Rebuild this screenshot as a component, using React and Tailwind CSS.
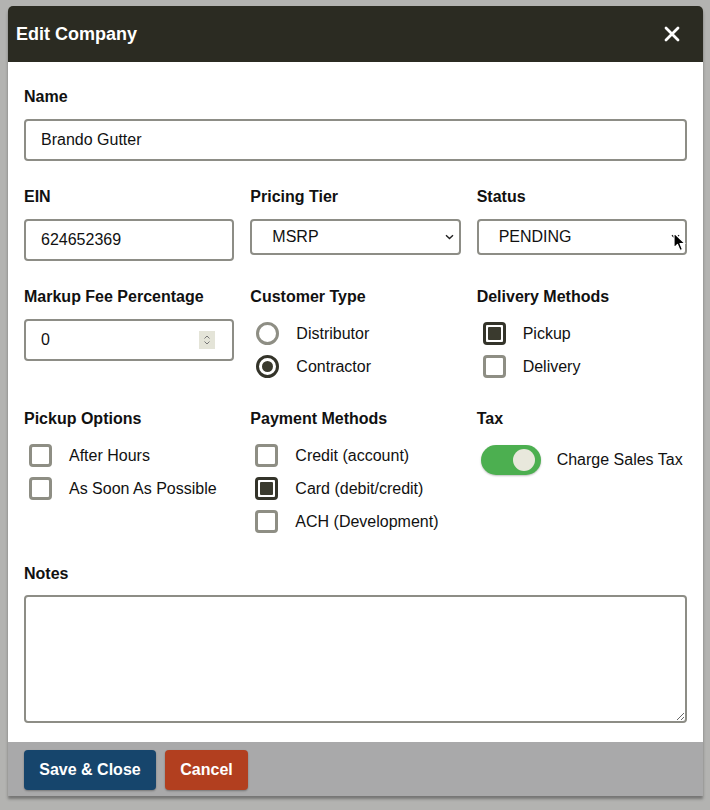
import React from "react";

const font = { fontFamily: '"Liberation Sans", Arial, Helvetica, sans-serif' };

function Label({ children, className = "mb-3" }) {
  return <div className={"text-[16px] font-bold leading-[20px] text-[#111] " + className}>{children}</div>;
}

function Checkbox({ checked }) {
  if (checked) {
    return (
      <div className="w-[23px] h-[23px] shrink-0 rounded-[4px] border-[3px] border-[#34342a] bg-white p-[2px]">
        <div className="w-full h-full bg-[#3a3a2e] rounded-[1px]" />
      </div>
    );
  }
  return <div className="w-[23px] h-[23px] shrink-0 rounded-[4px] border-[3px] border-[#8e8e84] bg-white" />;
}

function Radio({ checked }) {
  if (checked) {
    return (
      <div className="w-[23px] h-[23px] shrink-0 rounded-full border-[3px] border-[#34342a] bg-white flex items-center justify-center">
        <div className="w-[11px] h-[11px] rounded-full bg-[#3a3a2e]" />
      </div>
    );
  }
  return <div className="w-[23px] h-[23px] shrink-0 rounded-full border-[3px] border-[#8e8e84] bg-white" />;
}

function CheckRow({ checked, radio, children, offset = "ml-[5px]" }) {
  return (
    <div className="h-[33px] flex items-center">
      <div className={offset}>{radio ? <Radio checked={checked} /> : <Checkbox checked={checked} />}</div>
      <span className="ml-[17px] text-[16px] text-[#111]">{children}</span>
    </div>
  );
}

function Chevron() {
  return (
    <svg width="9" height="6" viewBox="0 0 9 6" className="shrink-0">
      <path d="M1 1.2 L4.5 4.6 L8 1.2" fill="none" stroke="#222" strokeWidth="1.4" />
    </svg>
  );
}

export default function App() {
  return (
    <div style={font} className="min-h-[810px] w-[710px] bg-[#b3b3b1] pt-[6px] pl-[8px] pr-[7px]">
      <div className="rounded-t-[5px] overflow-hidden shadow-[0_3px_3px_rgba(0,0,0,0.35)]">
        <div className="h-[56px] bg-[#2b2b22] flex items-center justify-between pl-2 pr-[23px]">
          <span className="text-white text-[18px] font-bold">Edit Company</span>
          <svg width="16" height="16" viewBox="0 0 16 16">
            <path d="M2 2 L14 14 M14 2 L2 14" stroke="#fff" strokeWidth="2.8" strokeLinecap="round" />
          </svg>
        </div>
        <div className="bg-white px-4 pt-[25px] pb-[19px]">
          <Label>Name</Label>
          <div className="h-[42px] border-2 border-[#8d8d86] rounded-[4px] flex items-center px-[15px] text-[16px] text-[#111]">
            Brando Gutter
          </div>

          <div className="grid grid-cols-3 gap-x-4 mt-[26px]">
            <div>
              <Label>EIN</Label>
              <div className="h-[42px] border-2 border-[#8d8d86] rounded-[4px] flex items-center px-[15px] text-[16px] text-[#111]">
                624652369
              </div>
            </div>
            <div>
              <Label>Pricing Tier</Label>
              <div className="h-[36px] border-2 border-[#8d8d86] rounded-[4px] flex items-center justify-between pl-[20px] pr-[5px] text-[16px] text-[#111]">
                <span>MSRP</span>
                <Chevron />
              </div>
            </div>
            <div className="relative">
              <Label>Status</Label>
              <div className="h-[36px] border-2 border-[#8d8d86] rounded-[4px] flex items-center justify-between pl-[20px] pr-[5px] text-[16px] text-[#111]">
                <span>PENDING</span>
                <Chevron />
              </div>
              <svg className="absolute left-[196px] top-[45px]" width="14" height="20" viewBox="0 0 14 20">
                <path d="M1 1 L1 16 L4.5 12.5 L7 18.5 L9.5 17.5 L7 11.5 L12 11.5 Z" fill="#000" stroke="#fff" strokeWidth="1.2" strokeLinejoin="round" />
              </svg>
            </div>
          </div>

          <div className="grid grid-cols-3 gap-x-4 mt-[26px]">
            <div>
              <Label>Markup Fee Percentage</Label>
              <div className="h-[42px] border-2 border-[#8d8d86] rounded-[4px] flex items-center justify-between pl-[15px] pr-[17px] text-[16px] text-[#111]">
                <span>0</span>
                <div className="w-[16px] h-[18px] bg-[#e4e4d8] flex items-center justify-center">
                  <svg width="8" height="12" viewBox="0 0 8 12">
                    <path d="M1.5 4.5 L4 2 L6.5 4.5 M1.5 7.5 L4 10 L6.5 7.5" fill="none" stroke="#777" strokeWidth="1" />
                  </svg>
                </div>
              </div>
            </div>
            <div>
              <Label>Customer Type</Label>
              <div className="-mt-[2px]">
                <CheckRow radio offset="ml-[6px]">Distributor</CheckRow>
                <CheckRow radio checked offset="ml-[6px]">Contractor</CheckRow>
              </div>
            </div>
            <div>
              <Label>Delivery Methods</Label>
              <div className="-mt-[2px]">
                <CheckRow checked offset="ml-[6px]">Pickup</CheckRow>
                <CheckRow offset="ml-[6px]">Delivery</CheckRow>
              </div>
            </div>
          </div>

          <div className="grid grid-cols-3 gap-x-4 mt-[26px]">
            <div>
              <Label>Pickup Options</Label>
              <div className="-mt-[2px]">
                <CheckRow>After Hours</CheckRow>
                <CheckRow>As Soon As Possible</CheckRow>
              </div>
            </div>
            <div>
              <Label>Payment Methods</Label>
              <div className="-mt-[2px]">
                <CheckRow>Credit (account)</CheckRow>
                <CheckRow checked>Card (debit/credit)</CheckRow>
                <CheckRow>ACH (Development)</CheckRow>
              </div>
            </div>
            <div>
              <Label className="mb-0">Tax</Label>
              <div className="flex items-center ml-1 mt-[16px]">
                <div className="w-[60px] h-[30px] rounded-full bg-[#4caf50] flex items-center justify-end pr-[6px] shadow-[0_1px_2px_rgba(0,0,0,0.25)]">
                  <div className="w-[22px] h-[22px] rounded-full bg-[#e8e8dc]" />
                </div>
                <span className="ml-4 text-[16px] text-[#111]">Charge Sales Tax</span>
              </div>
            </div>
          </div>

          <div className="mt-[26px]">
            <Label className="mb-[11px]">Notes</Label>
            <textarea
              className="block w-full h-[128px] border-2 border-[#8d8d86] rounded-[4px] bg-white outline-none"
              defaultValue=""
            />
          </div>
        </div>
        <div className="bg-[#a9a9aa] h-[54px] flex items-start pt-2 px-4 gap-[9px]">
          <button className="h-[40px] w-[132px] rounded-[4px] bg-[#16456c] text-white text-[16px] font-bold shadow-[0_1px_2px_rgba(0,0,0,0.3)]">
            Save &amp; Close
          </button>
          <button className="h-[40px] w-[83px] rounded-[4px] bg-[#b23f1f] text-white text-[16px] font-bold shadow-[0_1px_2px_rgba(0,0,0,0.3)]">
            Cancel
          </button>
        </div>
      </div>
    </div>
  );
}
